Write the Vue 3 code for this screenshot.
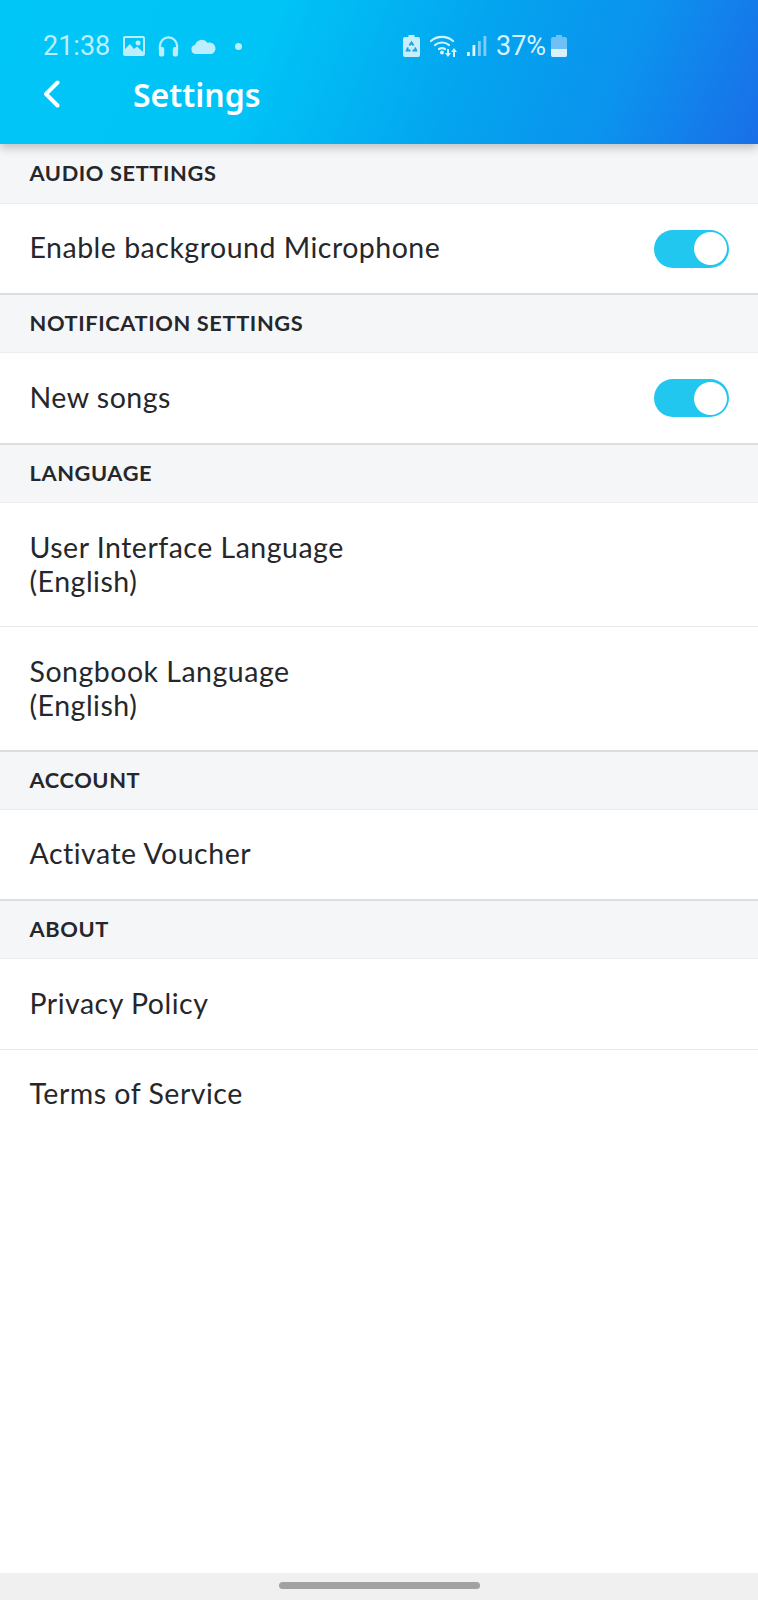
<script setup>
const sections = [
  { title: 'AUDIO SETTINGS', rows: [{ lines: ['Enable background Microphone'], toggle: true }] },
  { title: 'NOTIFICATION SETTINGS', rows: [{ lines: ['New songs'], toggle: true }] },
  { title: 'LANGUAGE', rows: [{ lines: ['User Interface Language', '(English)'] }, { lines: ['Songbook Language', '(English)'] }] },
  { title: 'ACCOUNT', rows: [{ lines: ['Activate Voucher'] }] },
  { title: 'ABOUT', rows: [{ lines: ['Privacy Policy'] }, { lines: ['Terms of Service'] }] },
]
</script>

<template>
  <div class="page">
    <header class="top">
      <div class="status">
        <div class="status-left">
          <span class="time">21:38</span>
          <svg class="ic" width="22" height="20" viewBox="0 0 22 20"><path fill="#bdeefd" fill-rule="evenodd" d="M2 0h18a2 2 0 0 1 2 2v16a2 2 0 0 1-2 2H2a2 2 0 0 1-2-2V2a2 2 0 0 1 2-2zm0 2v11l5-5 4 5 3-2.500 6 5.500V2zM15 4.500a2.500 2.500 0 1 1 0 5 2.500 2.500 0 0 1 0-5z"/></svg>
          <svg class="ic ic2" width="21" height="21" viewBox="0 0 22 21"><path fill="none" stroke="#bdeefd" stroke-width="2.400" d="M2 14V10a9 9 0 0 1 18 0v4"/><rect fill="#bdeefd" x="1" y="11" width="5.500" height="10" rx="2"/><rect fill="#bdeefd" x="15.500" y="11" width="5.500" height="10" rx="2"/></svg>
          <svg class="ic ic3" width="25" height="15" viewBox="0 0 25 15"><path fill="#bdeefd" d="M5 15a4.500 4.500 0 0 1-1-8.900A7 7 0 0 1 16.500 3.800 5.600 5.600 0 0 1 20.500 15z"/></svg>
          <span class="dot"></span>
        </div>
        <div class="status-right">
          <svg width="17" height="22" viewBox="0 0 17 22"><path fill="#c8eefc" d="M5.500 0h6v2h3.500a2 2 0 0 1 2 2v16a2 2 0 0 1-2 2H2a2 2 0 0 1-2-2V4a2 2 0 0 1 2-2h3.500z"/><g fill="none" stroke="#1a9fe0" stroke-width="1.900"><path d="M6.500 10.500L8.500 7.500 10.500 10.500"/><path d="M12 12.500L13.200 15.500H9.500"/><path d="M5 12.500L3.800 15.500H7.500"/></g></svg>
          <svg class="wifi" width="29" height="22" viewBox="0 0 29 22"><g fill="none" stroke="#d6f3fd" stroke-width="2.200" stroke-linecap="round"><path d="M1 6a17 17 0 0 1 22 0"/><path d="M5 10a11 11 0 0 1 14 0"/><path d="M9 14a6 6 0 0 1 6 0"/></g><circle cx="12" cy="17.500" r="2" fill="#d6f3fd"/><path fill="#d6f3fd" d="M17 14h2v4h2l-3 4-3-4h2zM25 22h-2v-5h-2l3-4 3 4h-2z"/></svg>
          <svg class="sig" width="20" height="22" viewBox="0 0 20 22"><rect x="0" y="17" width="2.800" height="4" fill="#e0f6fe"/><rect x="5.500" y="10" width="2.800" height="11" fill="#e0f6fe"/><rect x="11" y="6" width="2.800" height="15" fill="#7fcdf3"/><rect x="16.500" y="1" width="2.800" height="20" fill="#7fcdf3"/></svg>
          <span class="pct">37%</span>
          <svg class="bat" width="16" height="22" viewBox="0 0 16 22"><path fill="#6ec0f6" d="M5 0h6v2h3a2 2 0 0 1 2 2v16a2 2 0 0 1-2 2H2a2 2 0 0 1-2-2V4a2 2 0 0 1 2-2h3z"/><path fill="#d9f1fd" d="M0 14h16v6a2 2 0 0 1-2 2H2a2 2 0 0 1-2-2z"/></svg>
        </div>
      </div>
      <div class="bar">
        <svg class="back" width="18" height="28" viewBox="0 0 18 28"><path fill="none" stroke="#fff" stroke-width="4" stroke-linecap="round" stroke-linejoin="round" d="M14.500 2.500 L3 14 L14.500 25.500"/></svg>
        <h1 class="title">Settings</h1>
      </div>
    </header>
    <main class="list">
      <section v-for="s in sections" :key="s.title" class="sec">
        <div class="sec-title">{{ s.title }}</div>
        <div v-for="r in s.rows" :key="r.lines[0]" class="row" :class="{ tall: r.lines.length > 1 }">
          <div class="label"><div v-for="l in r.lines" :key="l">{{ l }}</div></div>
          <span v-if="r.toggle" class="toggle"><span class="knob"></span></span>
        </div>
      </section>
    </main>
    <footer class="nav"><span class="pill"></span></footer>
  </div>
</template>

<style>
html, body { margin: 0; background: #fff; }
</style>

<style scoped>
.page {
  width: 758px;
  height: 1600px;
  display: flex;
  flex-direction: column;
  background: #fff;
  font-family: Lato, "Noto Sans", sans-serif;
  color: #26272b;
  overflow: hidden;
}
.top {
  height: 144px;
  box-sizing: border-box;
  padding: 27px 0 0 43px;
  background: linear-gradient(112deg, #00c6f7 0%, #00c3f6 35%, #04a3ef 62%, #0b93ee 80%, #1a6ee8 100%);
  box-shadow: 0 4px 9px rgba(0, 0, 0, .22);
  position: relative;
  z-index: 1;
  flex: none;
}
.status {
  display: flex;
  height: 38px;
  align-items: center;
  font-family: Roboto, sans-serif;
  font-size: 27px;
  color: #bdeefd;
}
.status-left { display: flex; align-items: center; width: 360px; }
.time { width: 80px; }
.ic { flex: none; }
.ic2 { margin-left: 13px; }
.ic3 { margin-left: 12px; }
.dot { width: 7px; height: 7px; border-radius: 50%; background: #bdeefd; margin-left: 19px; }
.status-right { display: flex; align-items: center; }
.wifi { margin-left: 10px; }
.sig { margin-left: 8px; }
.pct { margin-left: 9px; color: #d6f3fd; width: 55px; }
.bar { display: flex; align-items: center; height: 46px; margin-top: 7px; }
.back { flex: none; margin-top: -2px; }
.title {
  margin: 0 0 0 72px;
  font-size: 32px;
  font-weight: 600;
  font-family: "Noto Sans", sans-serif;
  color: #fff;
  line-height: 46px;
}
.list { flex: 1; }
.sec-title {
  height: 58px;
  box-sizing: border-box;
  padding: 0 0 1.500px 29.500px;
  display: flex;
  align-items: center;
  background: #f5f6f8;
  border-bottom: 1px solid #ececee;
  font-size: 21.800px;
  font-weight: 700;
  letter-spacing: .6px;
}
.sec:first-child .sec-title { height: 60px; }
.sec { border-bottom: 2px solid #dcdddf; }
.sec:last-child { border-bottom: 0; }
.row {
  height: 91px;
  box-sizing: border-box;
  padding: 0 29px 0 29.500px;
  display: flex;
  align-items: center;
  justify-content: space-between;
  font-size: 28.500px;
  letter-spacing: .5px;
  border-bottom: 1px solid #e9eaec;
}
.row:last-child { border-bottom: 0; height: 89px; }
.sec:nth-child(2) .row:last-child { height: 90px; }
.row .label { margin-bottom: 3px; }
.row.tall { height: 124px; line-height: 33.500px; }
.row.tall:last-child { height: 123px; }
.row.tall .label { margin-bottom: 0; }
.toggle {
  width: 75px;
  height: 38px;
  box-sizing: border-box;
  border-radius: 19px;
  background: #22c7f0;
  padding: 2.500px;
  display: flex;
  justify-content: flex-end;
  flex: none;
}
.knob { width: 33px; height: 33px; border-radius: 50%; background: #fff; }
.nav {
  height: 27px;
  flex: none;
  background: #f0f0f0;
  display: flex;
  justify-content: center;
  padding-top: 9px;
  box-sizing: border-box;
}
.pill { width: 201px; height: 7px; border-radius: 4px; background: #a2a2a2; }
</style>
